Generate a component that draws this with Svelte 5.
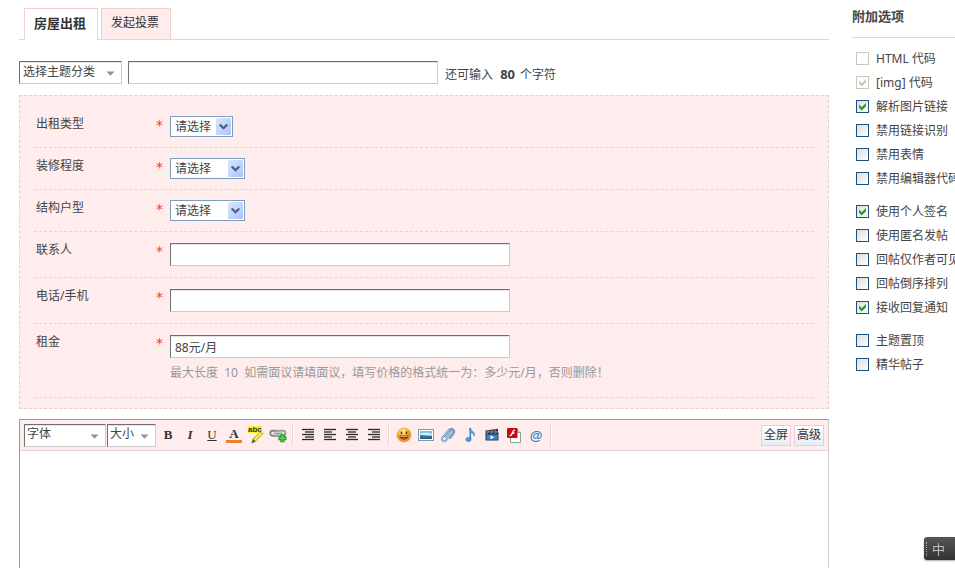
<script>
  let subject = $state('');
  let rent = $state('88元/月');
  let content = $state('');

  const fields = [
    { id: 'rent-type', label: '出租类型', kind: 'select', size: 'short' },
    { id: 'decoration', label: '装修程度', kind: 'select', size: 'long' },
    { id: 'structure', label: '结构户型', kind: 'select', size: 'long' },
    { id: 'contact', label: '联系人', kind: 'text' },
    { id: 'phone', label: '电话/手机', kind: 'text' },
  ];

  const groups = [
    [
      { id: 'o1', label: 'HTML 代码', checked: false, disabled: true },
      { id: 'o2', label: '[img] 代码', checked: true, disabled: true },
      { id: 'o3', label: '解析图片链接', checked: true },
      { id: 'o4', label: '禁用链接识别', checked: false },
      { id: 'o5', label: '禁用表情', checked: false },
      { id: 'o6', label: '禁用编辑器代码', checked: false },
    ],
    [
      { id: 'o7', label: '使用个人签名', checked: true },
      { id: 'o8', label: '使用匿名发帖', checked: false },
      { id: 'o9', label: '回帖仅作者可见', checked: false },
      { id: 'o10', label: '回帖倒序排列', checked: false },
      { id: 'o11', label: '接收回复通知', checked: true },
    ],
    [
      { id: 'o12', label: '主题置顶', checked: false },
      { id: 'o13', label: '精华帖子', checked: false },
    ],
  ];

  const aligns = [
    { name: '自动排版', rows: [[2, 14], [5, 14], [2, 14], [5, 14], [2, 14]] },
    { name: '左对齐', rows: [[2, 14], [2, 10], [2, 14], [2, 10], [2, 14]] },
    { name: '居中', rows: [[2, 14], [4, 12], [2, 14], [4, 12], [2, 14]] },
    { name: '右对齐', rows: [[2, 14], [6, 14], [2, 14], [6, 14], [2, 14]] },
  ];
</script>

{#snippet grayArrow()}
  <svg class="gray-arrow" width="9" height="5" viewBox="0 0 9 5" aria-hidden="true"><path d="M0.5 0.5h8L4.5 4.7z" fill="#929292" /></svg>
{/snippet}

{#snippet star()}
  <span class="star">*</span>
{/snippet}

<div class="page">
  <main>
    <nav class="tabs">
      <a class="tab current" href="#rent">房屋出租</a>
      <a class="tab" href="#poll">发起投票</a>
    </nav>

    <div class="subject">
      <div class="picker type">
        <select class="sunken" aria-label="选择主题分类"><option>选择主题分类</option></select>
        {@render grayArrow()}
      </div>
      <input class="sunken title" type="text" aria-label="标题" bind:value={subject} />
      <p>还可输入 <strong>{80 - subject.length}</strong> 个字符</p>
    </div>

    <section class="form">
      {#each fields as f (f.id)}
        <div class="row">
          <label for={f.id}>{f.label}</label>
          {@render star()}
          {#if f.kind === 'select'}
            <div class="picker xp {f.size}">
              <select id={f.id}><option>请选择</option></select>
              <svg class="xp-arrow" width="15" height="17" viewBox="0 0 15 17" aria-hidden="true">
                <defs><linearGradient id="g-{f.id}" x2="1" y2="1"><stop stop-color="#dbe6fe" /><stop offset="1" stop-color="#abc4f5" /></linearGradient></defs>
                <rect width="15" height="17" rx="1" fill="url(#g-{f.id})" />
                <path d="M3.7 6.5l3.8 3.8 3.8-3.8" fill="none" stroke="#4a5f8c" stroke-width="2.2" />
              </svg>
            </div>
          {:else}
            <div class="control"><input id={f.id} class="sunken" type="text" /></div>
          {/if}
        </div>
      {/each}
      <div class="row">
        <label for="rent">租金</label>
        {@render star()}
        <div class="control">
          <input id="rent" class="sunken" type="text" bind:value={rent} />
          <p class="hint">最大长度&nbsp; 10 &nbsp;如需面议请填面议，填写价格的格式统一为：多少元/月，否则删除！</p>
        </div>
      </div>
    </section>

    <section class="editor">
      <div class="toolbar">
        <div class="picker font">
          <select class="sunken" aria-label="字体"><option>字体</option></select>
          {@render grayArrow()}
        </div>
        <div class="picker size">
          <select class="sunken" aria-label="大小"><option>大小</option></select>
          {@render grayArrow()}
        </div>
        <div class="group">
          <button class="letter" aria-label="粗体">
            <b>B</b>
          </button>
          <button class="letter italic" aria-label="斜体">I</button>
          <button class="letter under" aria-label="下划线">U</button>
          <button class="letter color" aria-label="文字颜色"><span>A</span></button>
          <button class="mark" aria-label="背景颜色">
            <span>abc</span>
            <svg width="18" height="18" viewBox="0 0 18 18">
              <path d="M5 16.500l1-3.700L14.200 5.500l2 2L8.300 15.300z" fill="#e9e12d" stroke="#a39c22" stroke-width=".8" />
              <path d="M7.600 13.500l7-6.700" stroke="#fffb9b" />
              <path d="M4.600 17.400l1.500-4.400 2.500 2.400z" fill="#5d5535" />
            </svg>
          </button>
          <button aria-label="链接">
            <svg width="18" height="16" viewBox="0 0 18 16">
              <rect x="1.2" y="3.7" width="8.6" height="5" rx="2.5" fill="none" stroke="#868686" stroke-width="1.9" />
              <rect x="7.8" y="3.7" width="8.6" height="5" rx="2.5" fill="none" stroke="#a2a2a2" stroke-width="1.9" />
              <path d="M4.5 6.2h9" stroke="#eee" stroke-width="2.4" /><path d="M4.5 6.2h9" stroke="#777" stroke-width="1" />
              <path d="M13.4 7.2v8M9.4 11.2h8" stroke="#168b1c" stroke-width="4" />
              <path d="M13.4 8v6.4M10.2 11.2h6.4" stroke="#56d05a" stroke-width="2" />
            </svg>
          </button>
        </div>
        <div class="group">
          {#each aligns as a (a.name)}
            <button aria-label={a.name}>
              <svg width="16" height="14" viewBox="0 0 16 14">
                {#each a.rows as [from, to], i}
                  <path d="M{from} {i * 2.5 + 1.5}H{to}" stroke="#292929" stroke-width="1.3" />
                {/each}
              </svg>
            </button>
          {/each}
        </div>
        <div class="group">
          <button aria-label="表情">
            <svg width="16" height="16" viewBox="0 0 16 16">
              <defs><radialGradient id="face" cx=".4" cy=".25"><stop stop-color="#fff195" /><stop offset=".6" stop-color="#fdc13a" /><stop offset="1" stop-color="#ec9420" /></radialGradient></defs>
              <circle cx="8" cy="8" r="7" fill="url(#face)" stroke="#e4932b" stroke-width=".6" />
              <ellipse cx="5.5" cy="5.8" rx=".9" ry="1.5" fill="#6a3911" /><ellipse cx="10.5" cy="5.8" rx=".9" ry="1.5" fill="#6a3911" />
              <path d="M3.500 8.500h9c-.3 5.500-8.700 5.500-9 0z" fill="#7b2c0c" /><path d="M4.500 9h7v.8h-7z" fill="#f8d9a0" /><path d="M5.800 11.600c1.200-.9 3.200-.9 4.400 0-1.200.9-3.200.9-4.400 0z" fill="#e8694a" />
            </svg>
          </button>
          <button aria-label="图片">
            <svg width="16" height="14" viewBox="0 0 16 14">
              <rect x=".5" y="1.500" width="15" height="11" fill="#fff" stroke="#7b9dbd" />
              <path d="M2 3h12v8H2z" fill="#77c2ee" /><path d="M2 6c4-2 8-1 12 0v1H2z" fill="#d7f0fb" />
              <path d="M2 7.500c2-1.500 4 .8 12 .5v3H2z" fill="#3c7796" /><path d="M2 9.500h12V11H2z" fill="#275c67" />
            </svg>
          </button>
          <button aria-label="附件">
            <svg width="16" height="16" viewBox="0 0 16 16">
              <path d="M5 10.500l5.200-6c1.500-1.500 3.300.2 2 1.700l-6 7c-2.200 2.300-5.600-.5-3.500-3L9 3C11.700.2 16 3.600 13.500 6.600L9.500 11.500" fill="none" stroke="#7398b8" stroke-width="2" />
              <path d="M5 10.500l5.200-6c1.500-1.500 3.300.2 2 1.700l-6 7c-2.200 2.300-5.600-.5-3.500-3L9 3" fill="none" stroke="#bdd8ec" stroke-width=".9" />
            </svg>
          </button>
          <button aria-label="音乐">
            <svg width="16" height="16" viewBox="0 0 16 16">
              <path d="M8.300 1v11" stroke="#2c83c6" stroke-width="1.500" />
              <path d="M8 .8c.4 3 5.400 3.500 4.300 8.200C12 6.800 9.800 5.500 8 5.200z" fill="#55aee6" stroke="#2c7dbb" stroke-width=".6" />
              <ellipse cx="6.500" cy="12.500" rx="2.600" ry="2" fill="#4ba5e0" stroke="#2373b0" stroke-width=".7" />
            </svg>
          </button>
          <button aria-label="视频">
            <svg width="16" height="16" viewBox="0 0 16 16">
              <path d="M1.500 3.500L14 1.800v3H1.500z" fill="#333" /><path d="M3.500 3.400l1.500 1.400M7 3l1.500 1.600M10.500 2.600l1.500 1.800" stroke="#bbb" stroke-width=".8" />
              <path d="M1.500 5.200h13V13.500h-13z" fill="#25384c" /><path d="M3 7l1.200-1.300M7 7l1.200-1.300M11 7l1.200-1.300" stroke="#aaa" stroke-width=".8" />
              <path d="M2.500 7.700h11v5h-11z" fill="#3687cc" /><path d="M6.500 8.200l3.600 2-3.600 2z" fill="#fff" />
            </svg>
          </button>
          <button aria-label="Flash">
            <svg width="16" height="16" viewBox="0 0 16 16">
              <path d="M4.500 2.500h7l3 3v10h-10z" fill="#fff" stroke="#999" /><path d="M11.500 2.500v3h3" fill="#eee" stroke="#999" />
              <rect x="1" y="1" width="10.500" height="10" rx="1" fill="#c30d13" />
              <path d="M9 3.200C6.500 3 6.800 5 6.100 6.500 5.600 8 5 8.700 3.700 8.800M5.700 6h2.700" fill="none" stroke="#fff" stroke-width="1.300" />
            </svg>
          </button>
          <button class="at" aria-label="提醒">@</button>
        </div>
        <div class="modes">
          <button>全屏</button>
          <button>高级</button>
        </div>
      </div>
      <textarea aria-label="正文" bind:value={content}></textarea>
    </section>
  </main>

  <aside>
    <h2>附加选项</h2>
    {#each groups as group}
      <ul>
        {#each group as o (o.id)}
          <li>
            <span class="box">
              <input id={o.id} type="checkbox" bind:checked={o.checked} disabled={o.disabled} />
              <svg width="13" height="13" viewBox="0 0 13 13" aria-hidden="true"><path d="M3 4.600l2.700 2.700L10 3v3.200L5.700 10.500 3 7.800z" /></svg>
            </span>
            <label for={o.id}>{o.label}</label>
          </li>
        {/each}
      </ul>
    {/each}
  </aside>
</div>

<div class="ime"><i></i><span>中</span></div>

<style>
  :global(body) {
    overflow: hidden;
    background: #fff;
  }
  .page, .ime, .page button, .page input, .page select, .page textarea {
    font-family: "Noto Sans", "Noto Sans CJK SC", sans-serif;
    font-size: 12px;
    color: #444;
  }
  .page * { box-sizing: border-box; }
  .page {
    display: flex;
    gap: 23px;
    height: 100vh;
    padding: 8px 0 0 19px;
    overflow: hidden;
    box-sizing: border-box;
  }
  main {
    flex: 1;
    min-width: 0;
    display: flex;
    flex-direction: column;
  }
  p, h2, ul { margin: 0; padding: 0; }
  button { margin: 0; padding: 0; border: 0; background: none; }

  .tabs {
    display: flex;
    gap: 3px;
    height: 32px;
    padding-left: 5px;
    border-bottom: 1px solid #f3cfcf;
  }
  .tab {
    height: 31px;
    padding: 0 9px;
    border: 1px solid #f3cfcf;
    border-bottom: 0;
    background: #ffecec;
    line-height: 28px;
    color: #333;
    text-decoration: none;
    min-width: 70px;
  }
  .tab.current {
    height: 32px;
    min-width: 74px;
    background: #fff;
    font-size: 13px;
    font-weight: bold;
  }

  .subject {
    display: flex;
    gap: 6px;
    margin: 21px 0 11px;
  }
  .subject p {
    padding: 4px 0 0 1px;
    line-height: 20px;
    white-space: nowrap;
  }
  .subject strong {
    margin: 0 2px 0 4px;
    font-size: 13px;
    line-height: 18px;
  }
  .picker { position: relative; }
  select {
    display: block;
    width: 100%;
    margin: 0;
    appearance: none;
    outline: 0;
  }
  .sunken {
    height: 23px;
    margin: 0;
    padding: 0 4px;
    border: 1px solid;
    border-color: #707070 #ccc #ccc #707070;
    border-radius: 0;
    background: #fff;
    box-shadow: inset 0 1px #e4e4e4;
    outline: 0;
  }
  select.sunken { padding: 0 3px 2px; }
  .gray-arrow {
    position: absolute;
    right: 7px;
    top: 10px;
    pointer-events: none;
  }
  .type { width: 103px; }
  .title { width: 310px; }

  .form {
    margin-top: -1px;
    padding: 10px 14px;
    border: 1px dashed #e8cfcf;
    background: #ffecec;
  }
  .row {
    display: grid;
    grid-template-columns: 122px 14px 1fr;
    min-height: 42px;
    border-bottom: 1px dashed #ecd0d0;
  }
  .row label {
    padding: 6px 0 0 2px;
    line-height: 24px;
  }
  .star {
    padding-top: 9px;
    font-family: "DejaVu Sans", sans-serif;
    font-size: 14px;
    line-height: 20px;
    color: #f33;
  }
  .xp { margin-top: 10px; }
  .short { width: 63px; }
  .long { width: 75px; }
  .xp select {
    height: 21px;
    padding: 0 4px;
    border: 1px solid #7f9db9;
    border-radius: 0;
    background: #fff;
  }
  .xp-arrow {
    position: absolute;
    right: 2px;
    top: 2px;
    pointer-events: none;
  }
  .control { padding: 11px 0; }
  .control .sunken {
    display: block;
    width: 340px;
  }
  .hint {
    padding: 3px 0 2px;
    line-height: 24px;
    color: #999;
    white-space: nowrap;
  }
  .row:last-child .control { padding-bottom: 10px; }

  .editor {
    flex: 1;
    display: flex;
    flex-direction: column;
    min-height: 140px;
    margin-top: 10px;
    border: 1px solid;
    border-color: #999 #ccc #ccc #999;
    border-bottom: 0;
  }
  .toolbar {
    display: flex;
    align-items: center;
    height: 31px;
    padding: 0 4px;
    border-bottom: 1px solid #e6d3d3;
    background: #ffecec;
  }
  .toolbar select.sunken { padding: 0 2px 3px; }
  .font { width: 82px; margin-right: 1px; }
  .size { width: 49px; margin-right: 1px; }
  .group {
    display: flex;
    padding-right: 3px;
    margin-right: 4px;
    border-right: 1px solid #e7d6d6;
    box-shadow: 1px 0 #fff6f6;
  }
  .group button {
    display: flex;
    align-items: center;
    justify-content: center;
    width: 22px;
    height: 22px;
  }
  .group .letter {
    font-family: "Liberation Serif", serif;
    font-size: 13px;
    font-weight: bold;
    line-height: 16px;
    color: #333;
  }
  .group .italic { font-style: italic; }
  .group .under {
    font-weight: normal;
    text-decoration: underline;
  }
  .color span {
    width: 16px;
    height: 16px;
    border-bottom: 3px solid #e8842c;
    line-height: 13px;
  }
  .group .mark { position: relative; }
  .mark span {
    position: absolute;
    left: 3px;
    top: 2px;
    background: #f5f12c;
    font-family: "Liberation Sans", sans-serif;
    font-size: 8px;
    font-weight: bold;
    line-height: 7px;
    color: #333;
  }
  .mark svg { position: relative; }
  .group .at {
    font-family: "Liberation Sans", sans-serif;
    font-size: 13px;
    font-weight: bold;
    color: #287fbd;
  }
  .modes {
    display: flex;
    gap: 3px;
    margin-left: auto;
  }
  .modes button {
    width: 30px;
    height: 21px;
    border: 1px solid #f0cdd0;
    background: linear-gradient(#fff, #e5edf5);
    line-height: 18px;
    color: #333;
  }
  textarea {
    flex: 1;
    padding: 8px;
    border: 0;
    background: #fff;
    resize: none;
    outline: 0;
  }

  aside {
    width: 103px;
    white-space: nowrap;
  }
  h2 {
    height: 30px;
    margin-bottom: 8px;
    border-bottom: 1px solid #f3cfcf;
    font-size: 13px;
    line-height: 17px;
  }
  ul {
    margin-bottom: 9px;
    padding-left: 4px;
    list-style: none;
  }
  li {
    display: flex;
    align-items: center;
    gap: 7px;
    height: 24px;
  }
  .box { display: grid; }
  .box > * { grid-area: 1 / 1; }
  .box input {
    width: 13px;
    height: 13px;
    margin: 0;
    appearance: none;
    border: 1px solid #1c5180;
    background: linear-gradient(135deg, #dcdcd7, #fff);
  }
  .box svg {
    visibility: hidden;
    fill: #21a121;
    pointer-events: none;
  }
  .box input:checked + svg { visibility: visible; }
  .box input:disabled {
    border-color: #cac8bb;
    background: #fff;
  }
  .box input:disabled + svg { fill: #cac8bb; }

  .ime {
    position: fixed;
    right: 0;
    bottom: 8px;
    display: flex;
    align-items: center;
    gap: 5px;
    box-sizing: border-box;
    width: 31px;
    height: 23px;
    padding-left: 2px;
    border-radius: 3px 0 0 3px;
    background: linear-gradient(#555, #333);
    box-shadow: 0 1px 2px #aaa;
  }
  .ime i {
    height: 14px;
    border-left: 1px dotted #aaa;
  }
  .ime span {
    font-size: 13px;
    line-height: 20px;
    color: #bbb;
  }
</style>
